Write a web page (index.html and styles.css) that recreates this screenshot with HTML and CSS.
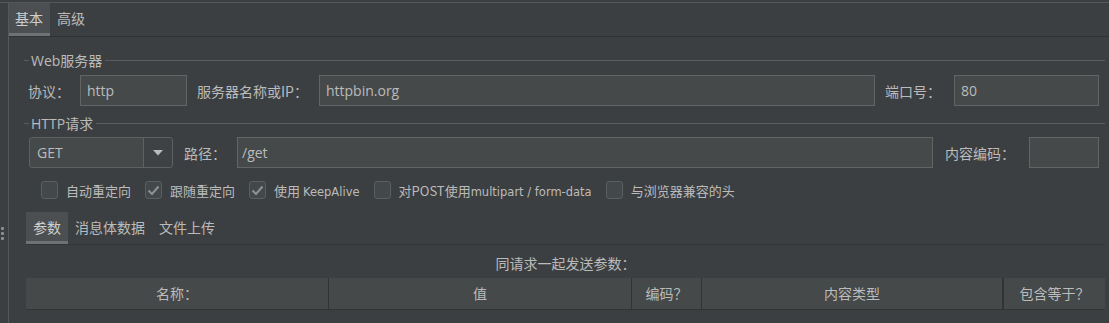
FILE: index.html
```html
<!DOCTYPE html>
<html lang="zh">
<head>
<meta charset="utf-8">
<link rel="stylesheet" href="styles.css">
</head>
<body>
<div class="app">
  <div class="strip">
    <div class="grip"><span></span><span></span><span></span></div>
  </div>
  <div class="main">
    <div class="tabbar">
      <div class="tab active">基本</div>
      <div class="tab">高级</div>
    </div>
    <div class="content">
      <div class="group-title"><span>Web服务器</span></div>
      <div class="row row-server">
        <label class="lbl">协议：</label>
        <div class="field f-proto">http</div>
        <label class="lbl">服务器名称或IP：</label>
        <div class="field f-host">httpbin.org</div>
        <label class="lbl">端口号：</label>
        <div class="field f-port">80</div>
      </div>
      <div class="group-title"><span>HTTP请求</span></div>
      <div class="row row-request">
        <div class="combo">
          <div class="combo-val">GET</div>
          <div class="combo-btn"><svg width="10" height="6" viewBox="0 0 10 6"><path d="M0 0H10L5 5.5Z" fill="#bbbbbb"/></svg></div>
        </div>
        <label class="lbl">路径：</label>
        <div class="field f-path">/get</div>
        <label class="lbl">内容编码：</label>
        <div class="field f-enc"></div>
      </div>
      <div class="checks">
        <div class="check"><span class="box"></span><span class="ctext">自动重定向</span></div>
        <div class="check"><span class="box on"><svg width="13" height="11" viewBox="0 0 13 11"><path d="M1.5 5.5L5 9L11.5 1.5" fill="none" stroke="#8f9193" stroke-width="2"/></svg></span><span class="ctext">跟随重定向</span></div>
        <div class="check"><span class="box on"><svg width="13" height="11" viewBox="0 0 13 11"><path d="M1.5 5.5L5 9L11.5 1.5" fill="none" stroke="#8f9193" stroke-width="2"/></svg></span><span class="ctext">使用 <span class="lat">KeepAlive</span></span></div>
        <div class="check"><span class="box"></span><span class="ctext">对POST使用<span class="lat">multipart / form-data</span></span></div>
        <div class="check"><span class="box"></span><span class="ctext">与浏览器兼容的头</span></div>
      </div>
      <div class="subpanel">
        <div class="subtabs">
          <div class="subtab active">参数</div>
          <div class="subtab">消息体数据</div>
          <div class="subtab">文件上传</div>
        </div>
        <div class="caption">同请求一起发送参数：</div>
        <div class="thead">
          <div class="th c1">名称：</div>
          <div class="th c2">值</div>
          <div class="th c3">编码？</div>
          <div class="th c4">内容类型</div>
          <div class="th c5">包含等于？</div>
        </div>
      </div>
    </div>
  </div>
</div>
</body>
</html>
```
FILE: styles.css
```css
* { box-sizing: border-box; }
html, body { margin: 0; padding: 0; }
body {
  background: #3c3f41;
  color: #bbbbbb;
  font-family: "Open Sans", "Noto Sans CJK SC", sans-serif;
  font-size: 14px;
  width: 1109px;
  height: 323px;
  overflow: hidden;
}
.app {
  display: flex;
  height: 323px;
  border-top: 1px solid #3c3f41;
}
.strip {
  width: 9px;
  flex: none;
  border-right: 1px solid #555859;
  border-top: 1px solid #555859;
  margin-top: 1px;
  padding-top: 224px;
}
.grip {
  display: flex;
  flex-direction: column;
  gap: 2px;
  padding-left: 1px;
}
.grip span {
  width: 3px;
  height: 3px;
  background: #8c8e90;
  border-radius: 1px;
}
.main {
  flex: 1;
  display: flex;
  flex-direction: column;
  border-top: 1px solid #555859;
  margin-top: 1px;
}
.tabbar {
  display: flex;
  height: 34px;
  border-bottom: 1px solid #303234;
}
.tab {
  padding: 0 7px 0 6px;
  line-height: 30px;
  height: 33px;
  border-bottom: 3px solid transparent;
  font-family: "Noto Sans CJK SC", sans-serif;
}
.tab + .tab { padding-left: 7px; }
.tab.active {
  background: #4b4f52;
  border-bottom-color: #6e7275;
  color: #cfcfcf;
}
.content {
  padding: 12px 4px 0 15px;
}
.group-title {
  display: flex;
  align-items: center;
  height: 22px;
}
.group-title::before {
  content: "";
  width: 5px;
  border-top: 1px solid #5a5d5f;
  margin-right: 2px;
}
.group-title::after {
  content: "";
  flex: 1;
  border-top: 1px solid #5a5d5f;
  margin-left: 3px;
}
.group-title span {
  font-family: "Open Sans", "Noto Sans CJK SC", sans-serif;
}
.row {
  display: flex;
  align-items: center;
  padding-left: 4px;
  height: 31px;
}
.row-server { margin-top: 4px; margin-bottom: 6px; }
.row-request { margin-top: 3px; padding-left: 5px; }
.lbl {
  font-family: "Noto Sans CJK SC", sans-serif;
  white-space: nowrap;
}
.field {
  height: 31px;
  background: #45494a;
  border: 1px solid #646464;
  padding: 0 6px;
  line-height: 29px;
  font-family: "Open Sans", sans-serif;
  color: #bbbbbb;
}
.f-proto { width: 107px; margin-left: 10px; margin-right: 10px; }
.f-host { flex: 1; margin-left: 11px; margin-right: 10px; }
.f-port { width: 145px; margin-left: 13px; margin-right: 6px; }
.combo {
  width: 144px;
  height: 31px;
  display: flex;
  border: 1px solid #5e6162;
  border-radius: 3px;
  background: #45494a;
  margin-right: 11px;
}
.combo-val {
  flex: 1;
  padding-left: 7px;
  line-height: 29px;
  border-right: 1px solid #5e6162;
  font-family: "Open Sans", sans-serif;
}
.combo-btn {
  width: 28px;
  display: flex;
  align-items: center;
  justify-content: center;
  background: #3f4244;
  border-radius: 0 3px 3px 0;
}
.f-path { flex: 1; margin-left: 11px; margin-right: 12px; padding-left: 4px; }
.f-enc { width: 70px; margin-left: 14px; margin-right: 6px; }
.checks {
  display: flex;
  align-items: center;
  height: 22px;
  margin-top: 11px;
  padding-left: 17px;
}
.check {
  display: flex;
  align-items: center;
  margin-right: 14px;
}
.box {
  width: 17px;
  height: 18px;
  border: 1px solid #5b5e5f;
  border-radius: 3px;
  background: #43494a;
  margin-right: 8px;
  display: flex;
  align-items: center;
  justify-content: center;
}
.ctext {
  font-family: "Noto Sans CJK SC", sans-serif;
  font-size: 13px;
}
.lat {
  font-family: "DejaVu Sans", sans-serif;
  font-size: 11.5px;
}
.subpanel {
  margin-top: 11px;
  margin-left: 2px;
}
.subtabs {
  display: flex;
  height: 33px;
  border-bottom: 1px solid #323436;
}
.subtab {
  padding: 0 7px;
  line-height: 30px;
  height: 32px;
  border-bottom: 3px solid transparent;
  font-family: "Noto Sans CJK SC", sans-serif;
}
.subtab.active {
  background: #4b4f52;
  border-bottom-color: #6e7275;
  color: #cfcfcf;
}
.caption {
  text-align: center;
  height: 33px;
  line-height: 36px;
  font-family: "Noto Sans CJK SC", sans-serif;
}
.thead {
  display: flex;
  height: 32px;
  background: #45494a;
  border-bottom: 1px solid #323436;
}
.th {
  text-align: center;
  line-height: 31px;
  font-family: "Noto Sans CJK SC", sans-serif;
  border-right: 1px solid #313335;
}
.c1 { width: 303px; }
.c2 { width: 303px; }
.c3 { width: 70px; }
.c4 { width: 302px; border-right: 2px solid #313335; }
.c5 { flex: 1; border-right: none; }
```
